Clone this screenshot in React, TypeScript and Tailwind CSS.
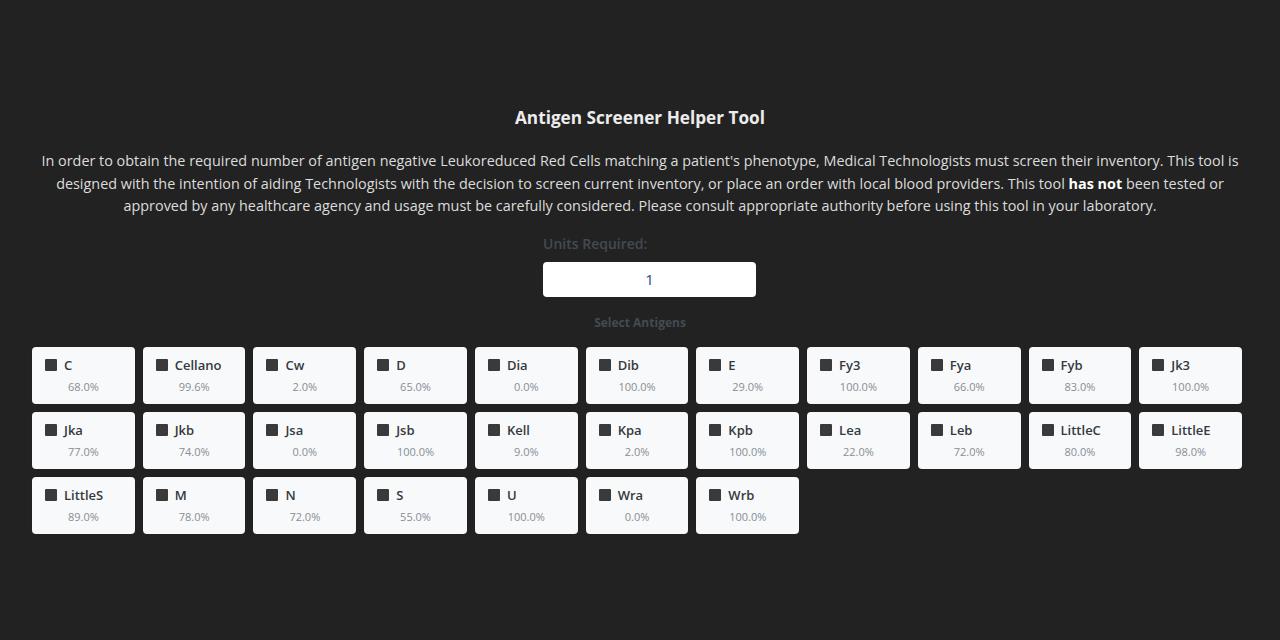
import { useState } from "react";

// antigen -> prevalence in donor population
const antigens: [string, string][] = [
  ["C", "68.0%"],
  ["Cellano", "99.6%"],
  ["Cw", "2.0%"],
  ["D", "65.0%"],
  ["Dia", "0.0%"],
  ["Dib", "100.0%"],
  ["E", "29.0%"],
  ["Fy3", "100.0%"],
  ["Fya", "66.0%"],
  ["Fyb", "83.0%"],
  ["Jk3", "100.0%"],
  ["Jka", "77.0%"],
  ["Jkb", "74.0%"],
  ["Jsa", "0.0%"],
  ["Jsb", "100.0%"],
  ["Kell", "9.0%"],
  ["Kpa", "2.0%"],
  ["Kpb", "100.0%"],
  ["Lea", "22.0%"],
  ["Leb", "72.0%"],
  ["LittleC", "80.0%"],
  ["LittleE", "98.0%"],
  ["LittleS", "89.0%"],
  ["M", "78.0%"],
  ["N", "72.0%"],
  ["S", "55.0%"],
  ["U", "100.0%"],
  ["Wra", "0.0%"],
  ["Wrb", "100.0%"],
];

export default function App() {
  const [units, setUnits] = useState("1");
  const [picked, setPicked] = useState<string[]>([]);

  const toggle = (name: string) =>
    setPicked((p) => (p.includes(name) ? p.filter((n) => n !== name) : [...p, name]));

  return (
    <div className="min-h-[640px] bg-[#222222] font-['Open_Sans','Noto_Sans',sans-serif] text-[#dedede]">
      <div className="flex flex-col items-center pt-[106px]">
        <h1 className="text-[17.2px] font-bold leading-6 text-[#ececec]">Antigen Screener Helper Tool</h1>

        <p className="mt-[20px] w-[1216px] text-center text-[14.4px] leading-[22.5px] text-[#dcdcdc]">
          In order to obtain the required number of antigen negative Leukoreduced Red Cells matching a
          patient's phenotype, Medical Technologists must screen their inventory. This tool is designed with
          the intention of aiding Technologists with the decision to screen current inventory, or place an
          order with local blood providers. This tool <span className="font-bold text-white">has not</span> been
          tested or approved by any healthcare agency and usage must be carefully considered. Please consult
          appropriate authority before using this tool in your laboratory.
        </p>

        {/* units form */}
        <div className="ml-[19px] mt-[16px] flex flex-col items-start">
          <label className="text-[14px] font-semibold leading-5 text-[#434a54]">Units Required:</label>
          <input
            value={units}
            onChange={(e) => setUnits(e.target.value)}
            className="mt-[8px] h-[35px] w-[213px] rounded-[4px] bg-white text-center text-[15px] text-[#2a4a7a] outline-none"
          />
        </div>

        <div className="mt-[18px] text-[12px] font-bold leading-4 text-[#434a54]">Select Antigens</div>
      </div>

      <div className="ml-[32px] mt-[16px] grid w-[1210px] grid-cols-11 gap-x-2 gap-y-2 pb-10">
        {antigens.map(([name, pct]) => (
          <div
            key={name}
            onClick={() => toggle(name)}
            className="h-[57px] cursor-pointer rounded-[4px] bg-[#f8f9fa] px-[13px] pt-[9px] shadow-[0_0_1px_rgba(0,0,0,0.4)]"
          >
            <div className="flex items-center gap-[7px]">
              <span
                className={`h-[12px] w-[12px] shrink-0 rounded-[1px] ${
                  picked.includes(name) ? "bg-[#1d6fd8]" : "bg-[#3a3a3a]"
                }`}
              />
              <span className="text-[13px] font-semibold leading-[18px] text-[#343a40]">{name}</span>
            </div>
            <div className="mt-[5px] text-center text-[11px] leading-4 text-[#868e96]">{pct}</div>
          </div>
        ))}
      </div>
    </div>
  );
}
